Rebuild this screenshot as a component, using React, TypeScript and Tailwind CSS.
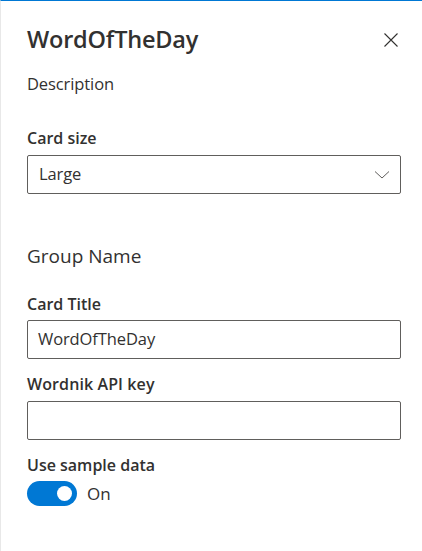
import React from "react";

export default function App() {
  return (
    <div
      className="w-[422px] h-[551px] bg-white border-t border-[#0078d4] border-l border-l-[#e8e8e8] text-[#323130] overflow-hidden"
      style={{ fontFamily: '"Open Sans", "Noto Sans", sans-serif' }}
    >
      <div className="pl-[26px] pr-[21px]">
        <div className="flex items-start justify-between mt-[22px]">
          <h1 className="text-[23.5px] leading-[32px] font-semibold tracking-[-0.2px]">WordOfTheDay</h1>
          <button className="mt-[10px] mr-[3px] w-[14px] h-[14px]" aria-label="Close">
            <svg width="14" height="14" viewBox="0 0 14 14">
              <path d="M0.5 0.5 L13.5 13.5 M13.5 0.5 L0.5 13.5" stroke="#323130" strokeWidth="1.1" />
            </svg>
          </button>
        </div>
        <div className="mt-[17px] text-[16.5px] leading-[24px] tracking-[-0.1px]">Description</div>

        <div className="mt-[31px] text-[16px] leading-[22px] font-semibold">Card size</div>
        <div className="mt-[6px] h-[39px] border border-[#605e5c] rounded-[2px] flex items-center justify-between pl-[11px] pr-[10px]">
          <span className="text-[16.5px] tracking-[-0.1px]">Large</span>
          <svg width="16" height="10" viewBox="0 0 16 10">
            <path d="M1 1.5 L8 8 L15 1.5" stroke="#605e5c" strokeWidth="1" fill="none" />
          </svg>
        </div>

        <div className="mt-[50px] text-[19px] leading-[24px]">Group Name</div>

        <div className="mt-[25px] text-[16px] leading-[22px] font-semibold">Card Title</div>
        <div className="mt-[5px] h-[39px] border border-[#605e5c] rounded-[2px] flex items-center pl-[10px]">
          <span className="text-[16.5px] tracking-[-0.1px]">WordOfTheDay</span>
        </div>

        <div className="mt-[14px] text-[16px] leading-[22px] font-semibold tracking-[0.1px]">Wordnik API key</div>
        <div className="mt-[6px] h-[39px] border border-[#605e5c] rounded-[2px]" />

        <div className="mt-[14px] text-[16px] leading-[22px] font-semibold">Use sample data</div>
        <div className="mt-[5px] flex items-center gap-[10px]">
          <div className="w-[50px] h-[25px] rounded-full bg-[#0078d4] flex items-center justify-end pr-[5px]">
            <div className="w-[15px] h-[15px] rounded-full bg-white" />
          </div>
          <span className="text-[17px]">On</span>
        </div>
      </div>
    </div>
  );
}
